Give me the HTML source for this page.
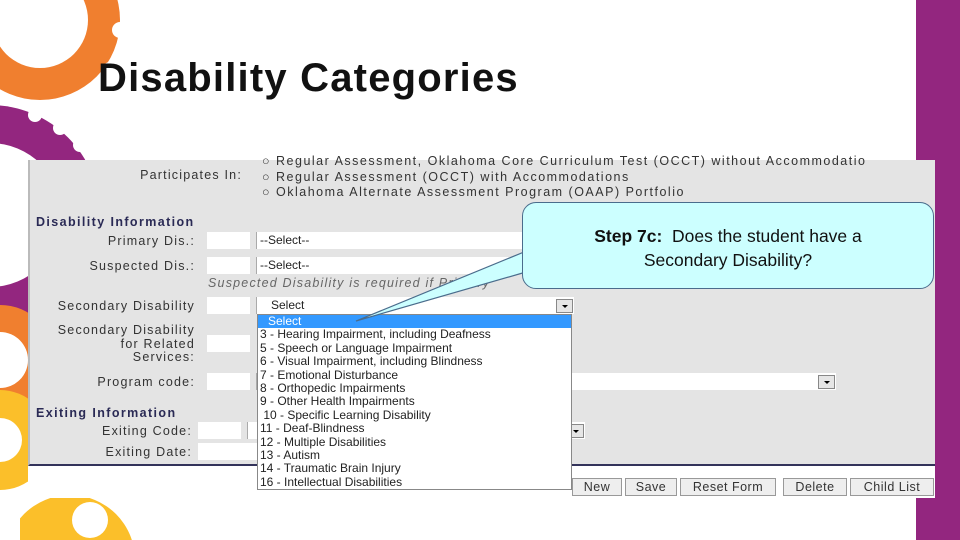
<!DOCTYPE html>
<html style="width:960px;height:540px;overflow:hidden"><head><meta charset="utf-8"><style>
*{margin:0;padding:0;box-sizing:border-box}
body{width:960px;height:540px;overflow:hidden;background:#fff;position:relative;font-family:"Liberation Sans",sans-serif}
.abs{position:absolute}
.lbl{position:absolute;right:765px;font-size:12.5px;color:#333;letter-spacing:1.2px;text-align:right;white-space:nowrap;line-height:13px}
.hd{position:absolute;left:36px;font-size:12.5px;font-weight:bold;color:#2a2a55;letter-spacing:1.4px}
.inp{position:absolute;background:#fff;height:17px}
.sel{position:absolute;background:#fff;height:17px;font-size:12px;color:#222;padding-left:3px;line-height:17px;border-left:1px solid #aaa}
.opt{font-size:12px;color:#222;height:13.4px;line-height:13.4px;padding-left:2px;white-space:nowrap;overflow:hidden}
.btn{position:absolute;top:478px;height:18px;background:#eee;border:1px solid #999;font-size:12.5px;color:#333;text-align:center;line-height:16px;letter-spacing:.5px}
.arr{position:absolute;width:17px;height:14px;background:#e6e6e6;border:1px solid #888}
.arr:after{content:"";position:absolute;left:5px;top:5px;border:3px solid transparent;border-top:3px solid #000}
</style></head><body>
<svg class="abs" style="left:0;top:0" width="960" height="540">
<circle cx="40" cy="20" r="80" fill="#f07f2f"/>
<circle cx="40" cy="20" r="48" fill="#fff"/>
<g fill="#fff"><circle cx="120" cy="30" r="8"/><circle cx="110" cy="70" r="8"/><circle cx="85" cy="100" r="8"/></g>
<circle cx="-10" cy="215" r="110" fill="#93267f"/>
<circle cx="-10" cy="215" r="72" fill="#fff"/>
<g fill="#fff"><circle cx="60" cy="128" r="7"/><circle cx="80" cy="145" r="7"/><circle cx="35" cy="115" r="7"/></g>
<circle cx="0" cy="360" r="55" fill="#f07f2f"/>
<circle cx="0" cy="360" r="28" fill="#fff"/>
<circle cx="0" cy="440" r="50" fill="#fbbf2a"/>
<circle cx="0" cy="440" r="22" fill="#fff"/>
<circle cx="70" cy="560" r="65" fill="#fbbf2a"/>
<circle cx="90" cy="520" r="18" fill="#fff"/>
<rect x="0" y="490" width="20" height="50" fill="#fff"/>
<rect x="916" y="0" width="44" height="540" fill="#93267f"/>
</svg>
<div class="abs" style="left:98px;top:56px;font-size:40px;font-weight:bold;color:#111;letter-spacing:1.2px;white-space:nowrap">Disability Categories</div>

<div class="abs" style="left:28px;top:160px;width:907px;height:306px;background:#e4e4e4;border-left:2px solid #bbb;border-bottom:2px solid #33335a"></div>
<div class="abs" style="left:28px;top:466px;width:907px;height:32px;background:#fff"></div>

<div class="abs" style="left:262px;top:154px;width:673px;overflow:hidden;font-size:12.5px;color:#333;letter-spacing:1.5px;line-height:15.5px;white-space:nowrap">○ Regular Assessment, Oklahoma Core Curriculum Test (OCCT) without Accommodatio<br>○ Regular Assessment (OCCT) with Accommodations<br>○ Oklahoma Alternate Assessment Program (OAAP) Portfolio</div>
<div class="lbl" style="top:169px;right:718px">Participates In:</div>
<div class="hd" style="top:215px">Disability Information</div>
<div class="lbl" style="top:235px">Primary Dis.:</div>
<div class="inp" style="left:207px;top:232px;width:43px"></div>
<div class="sel" style="left:256px;top:232px;width:280px">--Select--</div>
<div class="lbl" style="top:260px">Suspected Dis.:</div>
<div class="inp" style="left:207px;top:257px;width:43px"></div>
<div class="sel" style="left:256px;top:257px;width:280px">--Select--</div>
<div class="abs" style="left:208px;top:276px;font-size:12.5px;font-style:italic;color:#666;letter-spacing:1.2px;white-space:nowrap">Suspected Disability is required if Primary</div>
<div class="lbl" style="top:300px">Secondary Disability</div>
<div class="inp" style="left:207px;top:297px;width:43px"></div>
<div class="sel" style="left:256px;top:297px;width:318px;padding-left:14px">Select</div>
<div class="arr" style="left:556px;top:299px"></div>
<div class="lbl" style="top:324px;line-height:13.5px">Secondary Disability<br>for Related<br>Services:</div>
<div class="inp" style="left:207px;top:335px;width:43px"></div>
<div class="lbl" style="top:376px">Program code:</div>
<div class="inp" style="left:207px;top:373px;width:43px"></div>
<div class="sel" style="left:256px;top:373px;width:580px"></div>
<div class="arr" style="left:818px;top:375px"></div>
<div class="hd" style="top:406px">Exiting Information</div>
<div class="lbl" style="top:425px;right:768px">Exiting Code:</div>
<div class="inp" style="left:198px;top:422px;width:43px"></div>
<div class="sel" style="left:247px;top:422px;width:338px"></div>
<div class="arr" style="left:567px;top:424px"></div>
<div class="lbl" style="top:446px;right:768px">Exiting Date:</div>
<div class="inp" style="left:198px;top:443px;width:60px"></div>

<div class="abs" style="left:257px;top:314px;width:315px;height:176px;background:#fff;border:1px solid #888;overflow:hidden">
<div class="opt" style="background:#3399ff;color:#fff;padding-left:10px">Select</div>
<div class="opt">3 - Hearing Impairment, including Deafness</div>
<div class="opt">5 - Speech or Language Impairment</div>
<div class="opt">6 - Visual Impairment, including Blindness</div>
<div class="opt">7 - Emotional Disturbance</div>
<div class="opt">8 - Orthopedic Impairments</div>
<div class="opt">9 - Other Health Impairments</div>
<div class="opt">&nbsp;10 - Specific Learning Disability</div>
<div class="opt">11 - Deaf-Blindness</div>
<div class="opt">12 - Multiple Disabilities</div>
<div class="opt">13 - Autism</div>
<div class="opt">14 - Traumatic Brain Injury</div>
<div class="opt">16 - Intellectual Disabilities</div>
</div>

<div class="btn" style="left:572px;width:50px">New</div>
<div class="btn" style="left:625px;width:52px">Save</div>
<div class="btn" style="left:680px;width:96px">Reset Form</div>
<div class="btn" style="left:783px;width:64px">Delete</div>
<div class="btn" style="left:850px;width:84px">Child List</div>

<svg class="abs" style="left:0;top:0" width="960" height="540">
<path d="M524 252 L356 321 L526 272 Z" fill="#ccffff" stroke="#4a6c8c" stroke-width="1.2"/>
</svg>
<div class="abs" style="left:522px;top:202px;width:412px;height:87px;background:#ccffff;border:1.5px solid #4a6c8c;border-radius:14px;text-align:center;font-size:17.5px;color:#111;line-height:24px;padding-top:21px">
<b>Step 7c:</b>&nbsp; Does the student have a<br>Secondary Disability?</div>
<div class="abs" style="left:524px;top:253px;width:4px;height:18px;background:#ccffff"></div>
</body></html>
